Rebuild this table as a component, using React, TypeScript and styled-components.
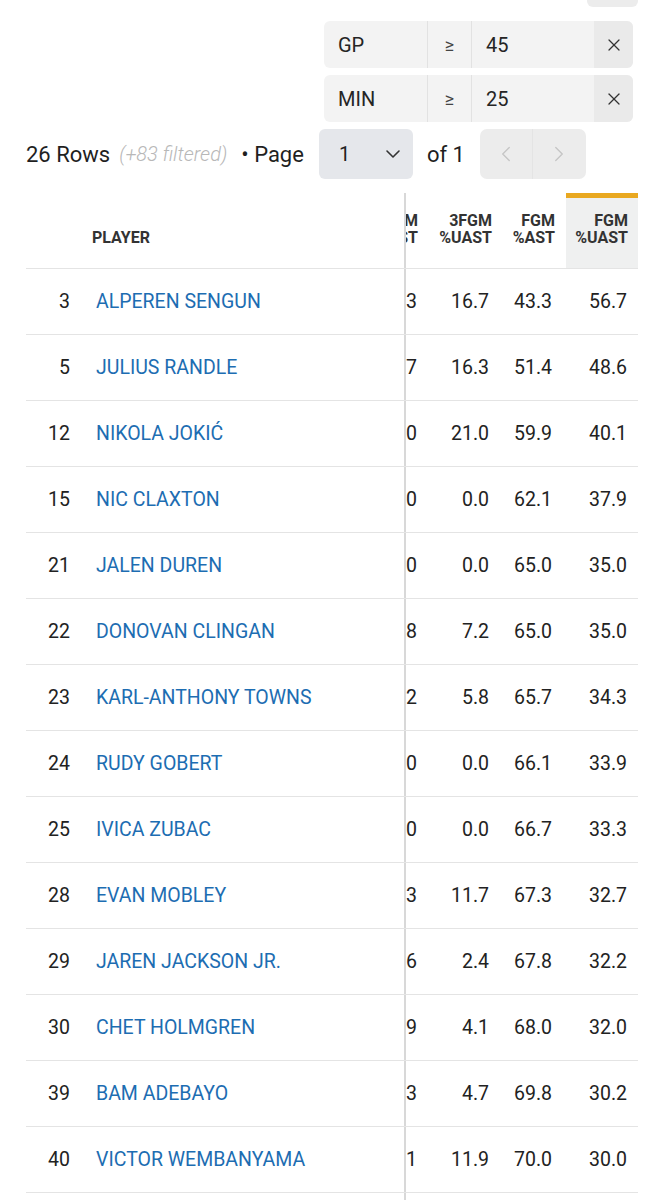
import React from "react";
import styled, { createGlobalStyle } from "styled-components";
import { ChevronDown, ChevronLeft, ChevronRight, X } from "lucide-react";

const Global = createGlobalStyle`
  html, body { margin: 0; padding: 0; background: #fff; }
  body { font-family: Roboto, "Noto Sans", Arial, sans-serif; color: #222; }
  * { box-sizing: border-box; }
`;

const Page = styled.div`
  width: 665px;
  padding: 0 27px 0 26px;
`;

const TopBar = styled.div`
  display: flex;
  justify-content: flex-end;
`;

const TopButton = styled.div`
  width: 51px;
  height: 14px;
  margin-top: -7px;
  border-radius: 6px;
  background: #ececec;
`;

const Filters = styled.div`
  display: flex;
  flex-direction: column;
  align-items: flex-end;
  gap: 7px;
  margin-top: 14px;
  padding-right: 5px;
`;

const FilterRow = styled.div`
  display: grid;
  grid-template-columns: 104px 44px 122px 39px;
  height: 47px;
  border-radius: 6px;
  overflow: hidden;
  background: #f3f3f3;
  font-size: 20px;
  color: #252525;
`;

const FilterCell = styled.div<{ $align?: string; $pad?: number; $divider?: boolean; $dark?: boolean }>`
  display: flex;
  align-items: center;
  justify-content: ${(p) => p.$align || "flex-start"};
  padding-left: ${(p) => p.$pad ?? 0}px;
  border-right: ${(p) => (p.$divider ? "1px solid #e2e2e2" : "none")};
  background: ${(p) => (p.$dark ? "#eaeaea" : "transparent")};
`;

const Op = styled.span`
  font-size: 18px;
  color: #444;
`;

const Pager = styled.div`
  display: flex;
  align-items: center;
  height: 50px;
  margin-top: 7px;
  font-size: 22px;
  color: #1f1f1f;
`;

const Filtered = styled.span`
  font-size: 20px;
  font-weight: 300;
  font-style: italic;
  color: #b8b8b8;
  margin-left: 9px;
`;

const PageLabel = styled.span`
  margin-left: 14px;
`;

const Select = styled.div`
  display: flex;
  align-items: center;
  justify-content: space-between;
  width: 94px;
  height: 50px;
  margin-left: 15px;
  padding: 0 8px 0 20px;
  border-radius: 6px;
  background: #e5e7eb;
  font-size: 20px;
  color: #222;
`;

const OfLabel = styled.span`
  margin-left: 14px;
`;

const NavGroup = styled.div`
  display: grid;
  grid-template-columns: 53px 53px;
  height: 50px;
  margin-left: 15px;
  border-radius: 7px;
  overflow: hidden;
  background: #ececec;
`;

const NavBtn = styled.div<{ $divider?: boolean }>`
  display: flex;
  align-items: center;
  justify-content: center;
  color: #c6c6c6;
  border-right: ${(p) => (p.$divider ? "1px solid #e4e4e4" : "none")};
`;

const Table = styled.div`
  margin-top: 14px;
`;

const Row = styled.div<{ $header?: boolean }>`
  display: grid;
  grid-template-columns: 54px 326px 232px;
  height: ${(p) => (p.$header ? 76 : 66)}px;
  border-bottom: 1px solid #e4e4e4;
`;

const RankCell = styled.div`
  display: flex;
  align-items: center;
  justify-content: flex-end;
  padding-right: 10px;
  font-size: 19.5px;
  color: #222;
`;

const PlayerCell = styled.div<{ $header?: boolean }>`
  display: flex;
  align-items: ${(p) => (p.$header ? "flex-end" : "center")};
  padding-left: ${(p) => (p.$header ? 12 : 16)}px;
  padding-bottom: ${(p) => (p.$header ? 22 : 0)}px;
  border-right: 2px solid #d8d8d8;
  font-size: ${(p) => (p.$header ? 16 : 19.5)}px;
  font-weight: ${(p) => (p.$header ? 700 : 400)};
  color: ${(p) => (p.$header ? "#333" : "#1d6db2")};
  line-height: 17px;
  white-space: nowrap;
`;

const Scroll = styled.div`
  display: flex;
  overflow: hidden;
`;

const StatCell = styled.div<{ $w: number; $pad: number; $shift?: number; $header?: boolean; $active?: boolean }>`
  flex: 0 0 ${(p) => p.$w}px;
  min-width: 0;
  margin-left: ${(p) => -(p.$shift || 0)}px;
  display: flex;
  align-items: ${(p) => (p.$header ? "flex-end" : "center")};
  justify-content: flex-end;
  text-align: right;
  padding-right: ${(p) => p.$pad}px;
  padding-bottom: ${(p) => (p.$header ? 22 : 0)}px;
  font-size: ${(p) => (p.$header ? 16 : 19.5)}px;
  font-weight: ${(p) => (p.$header ? 700 : 400)};
  line-height: 17px;
  color: ${(p) => (p.$header ? "#333" : "#222")};
  background: ${(p) => (p.$active ? "#eff0f0" : "transparent")};
  border-top: ${(p) => (p.$active ? "5px solid #e9a820" : "none")};
  white-space: nowrap;
`;

type Col = { label: [string, string]; w: number; hp: number; vp: number; shift?: number; active?: boolean };

const cols: Col[] = [
  { label: ["3FGM", "%AST"], w: 72, hp: 10, vp: 11, shift: 50 },
  { label: ["3FGM", "%UAST"], w: 72, hp: 8, vp: 11 },
  { label: ["FGM", "%AST"], w: 66, hp: 11, vp: 14 },
  { label: ["FGM", "%UAST"], w: 72, hp: 10, vp: 11, active: true },
];

const rows: [string, string, string, string, string, string][] = [
  ["3", "ALPEREN SENGUN", "83.3", "16.7", "43.3", "56.7"],
  ["5", "JULIUS RANDLE", "83.7", "16.3", "51.4", "48.6"],
  ["12", "NIKOLA JOKIĆ", "79.0", "21.0", "59.9", "40.1"],
  ["15", "NIC CLAXTON", "100.0", "0.0", "62.1", "37.9"],
  ["21", "JALEN DUREN", "100.0", "0.0", "65.0", "35.0"],
  ["22", "DONOVAN CLINGAN", "92.8", "7.2", "65.0", "35.0"],
  ["23", "KARL-ANTHONY TOWNS", "94.2", "5.8", "65.7", "34.3"],
  ["24", "RUDY GOBERT", "100.0", "0.0", "66.1", "33.9"],
  ["25", "IVICA ZUBAC", "100.0", "0.0", "66.7", "33.3"],
  ["28", "EVAN MOBLEY", "88.3", "11.7", "67.3", "32.7"],
  ["29", "JAREN JACKSON JR.", "97.6", "2.4", "67.8", "32.2"],
  ["30", "CHET HOLMGREN", "95.9", "4.1", "68.0", "32.0"],
  ["39", "BAM ADEBAYO", "95.3", "4.7", "69.8", "30.2"],
  ["40", "VICTOR WEMBANYAMA", "88.1", "11.9", "70.0", "30.0"],
  ["41", "DOMANTAS SABONIS", "90.0", "10.0", "70.2", "29.8"],
];

export default function App() {
  return (
    <>
      <Global />
      <Page>
        <TopBar>
          <TopButton />
        </TopBar>
        <Filters>
          {[
            ["GP", "45"],
            ["MIN", "25"],
          ].map(([k, v]) => (
            <FilterRow key={k}>
              <FilterCell $pad={14} $divider>{k}</FilterCell>
              <FilterCell $align="center" $divider>
                <Op>≥</Op>
              </FilterCell>
              <FilterCell $pad={14}>{v}</FilterCell>
              <FilterCell $align="center" $dark>
                <X size={20} strokeWidth={1.5} color="#333" />
              </FilterCell>
            </FilterRow>
          ))}
        </Filters>
        <Pager>
          <span>26 Rows</span>
          <Filtered>(+83 filtered)</Filtered>
          <PageLabel>• Page</PageLabel>
          <Select>
            <span>1</span>
            <ChevronDown size={24} strokeWidth={1.6} color="#333" />
          </Select>
          <OfLabel>of 1</OfLabel>
          <NavGroup>
            <NavBtn $divider>
              <ChevronLeft size={26} strokeWidth={1.3} />
            </NavBtn>
            <NavBtn>
              <ChevronRight size={26} strokeWidth={1.3} />
            </NavBtn>
          </NavGroup>
        </Pager>
        <Table>
          <Row $header>
            <RankCell />
            <PlayerCell $header>PLAYER</PlayerCell>
            <Scroll>
              {cols.map((c, i) => (
                <StatCell key={i} $header $w={c.w} $pad={c.hp} $shift={c.shift} $active={c.active}>
                  {c.label[0]}
                  <br />
                  {c.label[1]}
                </StatCell>
              ))}
            </Scroll>
          </Row>
          {rows.map((r) => (
            <Row key={r[0]}>
              <RankCell>{r[0]}</RankCell>
              <PlayerCell>{r[1]}</PlayerCell>
              <Scroll>
                {cols.map((c, i) => (
                  <StatCell key={i} $w={c.w} $pad={c.vp} $shift={c.shift}>
                    {r[i + 2]}
                  </StatCell>
                ))}
              </Scroll>
            </Row>
          ))}
        </Table>
      </Page>
    </>
  );
}
